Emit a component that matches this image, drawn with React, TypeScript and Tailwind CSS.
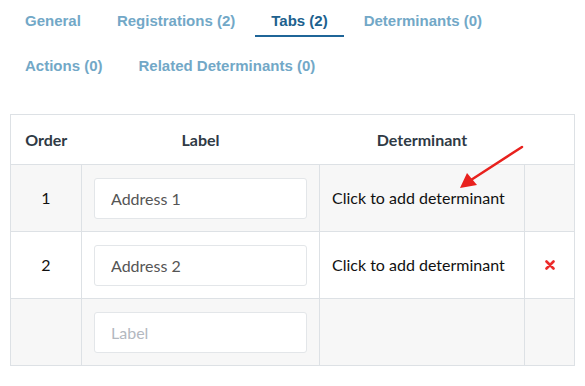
type Row = {
  order?: number;
  label: string;
  determinant?: string;
  removable?: boolean;
};

const rows: Row[] = [
  { order: 1, label: 'Address 1', determinant: 'Click to add determinant' },
  { order: 2, label: 'Address 2', determinant: 'Click to add determinant', removable: true },
  { label: '' },
];

const tabs = [
  { label: 'General' },
  { label: 'Registrations (2)' },
  { label: 'Tabs (2)', active: true },
  { label: 'Determinants (0)' },
  { label: 'Actions (0)' },
  { label: 'Related Determinants (0)' },
];

const App = () => {
  return (
    <div className="relative h-[386px] w-[585px] bg-white">
      <nav
        className="flex flex-wrap gap-x-1 gap-y-[18px] pl-[9px] pr-[80px] pt-[10px] text-[15px] font-bold leading-[22px]"
        style={{ fontFamily: '"Liberation Sans", Arial, sans-serif' }}
      >
        {tabs.map(tab => (
          <button
            key={tab.label}
            type="button"
            className={
              tab.active
                ? 'border-b-2 border-[#1f6598] px-4 pb-[3px] text-[#20618e]'
                : 'border-b-2 border-transparent px-4 pb-[3px] text-[#72a8c7]'
            }
          >
            {tab.label}
          </button>
        ))}
      </nav>

      <div className="mt-[32px] px-[10px]" style={{ fontFamily: 'Lato, "Open Sans", sans-serif' }}>
        <table className="w-full table-fixed border-collapse border border-[#dde1e5] text-[16px]">
          <colgroup>
            <col className="w-[71px]" />
            <col className="w-[238px]" />
            <col className="w-[205px]" />
            <col />
          </colgroup>
          <thead>
            <tr className="h-[50px] border-b border-[#dde1e5] bg-white text-[#2f3a45]">
              <th className="font-bold">Order</th>
              <th className="font-bold">Label</th>
              <th className="font-bold">Determinant</th>
              <th />
            </tr>
          </thead>
          <tbody>
            {rows.map((row, i) => (
              <tr key={i} className={i % 2 === 0 ? 'h-[67px] bg-[#f7f7f7]' : 'h-[67px] bg-white'}>
                <td className="border border-[#dde1e5] text-center text-[#111]">{row.order}</td>
                <td className="border border-[#dde1e5] px-3">
                  <input
                    readOnly
                    value={row.label}
                    placeholder="Label"
                    className="h-[41px] w-full rounded-[3px] border border-[#e3e6e9] bg-white px-4 text-[16px] text-[#555] placeholder:text-[#b3b8bf]"
                  />
                </td>
                <td className="border border-[#dde1e5] px-3 text-[#111]">{row.determinant}</td>
                <td className="border border-[#dde1e5] text-center">
                  {row.removable && (
                    <svg viewBox="0 0 10 10" className="mx-auto h-[10px] w-[10px]">
                      <path d="M1.5 1.5 L8.5 8.5 M8.5 1.5 L1.5 8.5" stroke="#ec2b2b" strokeWidth="2.6" strokeLinecap="round" />
                    </svg>
                  )}
                </td>
              </tr>
            ))}
          </tbody>
        </table>
      </div>

      <svg className="pointer-events-none absolute left-0 top-0" width="585" height="386">
        <line x1="522" y1="147" x2="471" y2="180" stroke="#e8211d" strokeWidth="2.5" strokeLinecap="round" />
        <polygon points="460,188 467,173 477,185" fill="#e8211d" />
      </svg>
    </div>
  );
};

export default App;
